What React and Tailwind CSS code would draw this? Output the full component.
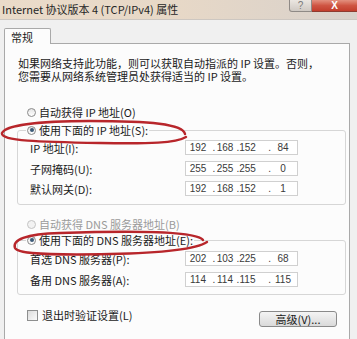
import React from "react";

function Radio({ checked, disabled, label, className = "" }) {
  return (
    <div className={"flex items-center h-[14px] gap-[3px] " + className}>
      <span
        className={
          "w-[9px] h-[9px] rounded-full border flex items-center justify-center " +
          (disabled
            ? "border-[#c4c4c4] bg-[#f2f2f2]"
            : "border-[#8a8a8a] bg-gradient-to-b from-[#e4e4e4] to-[#ffffff]")
        }
      >
        {checked && <span className="w-[4px] h-[4px] rounded-full bg-[#3b5a78]" />}
      </span>
      <span className={disabled ? "text-[#9a9a9a]" : "text-[#1a1a1a]"}>{label}</span>
    </div>
  );
}

function IpField({ parts, className = "" }) {
  return (
    <div
      className={
        "w-[113px] h-[15px] border border-[#d0d0d0] bg-white flex items-center text-[10px] text-[#3a3a3a] [font-family:'Liberation_Sans',sans-serif] " +
        className
      }
    >
      <span className="w-[24px] flex justify-center">{parts[0]}</span>
      <span className="w-[8px] flex justify-center">.</span>
      <span className="w-[14px] flex justify-center">{parts[1]}</span>
      <span className="w-[12px] flex justify-center">.</span>
      <span className="w-[7px] flex justify-center">{parts[2]}</span>
      <span className="w-[21px] flex justify-end pr-[1px]">.</span>
      <span className="w-[22px] flex justify-center">{parts[3]}</span>
    </div>
  );
}

function Row({ label, parts, className = "" }) {
  return (
    <div className={"flex items-center h-[15px] " + className}>
      <span className="pl-[12px] text-[#1a1a1a]">{label}</span>
      <IpField parts={parts} className="ml-auto mr-[47px]" />
    </div>
  );
}

export default function App() {
  return (
    <div className="relative w-[357px] h-[339px] overflow-hidden bg-[#f0f0f0] text-[11px] leading-[14px] text-[#1a1a1a] [font-family:'Noto_Sans_CJK_SC','Noto_Sans',sans-serif]">
      {/* title bar */}
      <div className="h-[20px] flex bg-gradient-to-r from-[#eadbc9] via-[#e7d8c7] to-[#d8d1cb] border-b border-[#cdc7c1]">
        <div className="pl-[2px] pt-[2px] text-[11px] leading-[14px] text-[#262626]">
          Internet 协议版本 4 (TCP/IPv4) 属性
        </div>
        <div className="ml-auto flex h-[12px]">
          <div className="w-[23px] h-[12px] border border-t-0 border-[#8f8a86] rounded-bl-[3px] bg-gradient-to-b from-[#ebe6e1] to-[#cfc9c3] text-[#7a7a7a] flex items-center justify-center text-[10px] leading-[10px] [font-family:'Liberation_Sans',sans-serif]">
            ?
          </div>
          <div className="w-[45px] h-[12px] border-b border-[#8e3b30] bg-gradient-to-b from-[#e2907f] via-[#cf5543] to-[#c23d2c] text-white flex items-center justify-center text-[10px] leading-[10px] font-bold [font-family:'Liberation_Sans',sans-serif]">
            X
          </div>
        </div>
      </div>

      {/* tabs */}
      <div className="pl-[4px] pt-[8px]">
        <div className="relative z-10 -mb-px w-[47px] h-[16px] border border-b-0 border-[#a9a9a9] bg-[#fcfcfc] flex items-center pl-[6px] rounded-t-[2px]">
          常规
        </div>
        <div className="w-[346px] h-[320px] border border-[#a9a9a9] bg-[#fcfcfc]">
          <div className="pl-[13px] pt-[13px] leading-[13px]">
            <p>如果网络支持此功能，则可以获取自动指派的 IP 设置。否则，</p>
            <p>您需要从网络系统管理员处获得适当的 IP 设置。</p>
          </div>

          <Radio disabled={false} label="自动获得 IP 地址(O)" className="ml-[22px] mt-[22px]" />

          <fieldset className="ml-[12px] mt-[4px] w-[329px] border border-[#d6d6d6] rounded-[3px] pb-[8px]">
            <legend className="ml-[8px] px-[1px]">
              <Radio checked label="使用下面的 IP 地址(S):" />
            </legend>
            <Row label="IP 地址(I):" parts={["192", "168", "152", "84"]} className="mt-[3px]" />
            <Row label="子网掩码(U):" parts={["255", "255", "255", "0"]} className="mt-[6px]" />
            <Row label="默认网关(D):" parts={["192", "168", "152", "1"]} className="mt-[5px]" />
          </fieldset>

          <Radio disabled label="自动获得 DNS 服务器地址(B)" className="ml-[22px] mt-[12px]" />

          <fieldset className="ml-[12px] mt-[2px] w-[329px] border border-[#d6d6d6] rounded-[3px] pb-[7px]">
            <legend className="ml-[8px] px-[1px]">
              <Radio checked label="使用下面的 DNS 服务器地址(E):" />
            </legend>
            <Row label="首选 DNS 服务器(P):" parts={["202", "103", "225", "68"]} className="mt-[4px]" />
            <Row label="备用 DNS 服务器(A):" parts={["114", "114", "115", "115"]} className="mt-[6px]" />
          </fieldset>

          <div className="flex items-start mt-[14px]">
            <div className="ml-[22px] flex items-center h-[12px] gap-[4px]">
              <span className="w-[11px] h-[11px] border border-[#8e8f8f] bg-gradient-to-br from-[#dcdcdc] to-[#fafafa]" />
              <span>退出时验证设置(L)</span>
            </div>
            <button className="ml-auto mr-[12px] mt-[2px] w-[78px] h-[16px] border border-[#8a8a8a] rounded-[3px] bg-gradient-to-b from-[#f4f4f4] to-[#dadada] flex items-center justify-center text-[11px] leading-[14px] text-[#1a1a1a]">
              高级(V)...
            </button>
          </div>
        </div>
      </div>

      {/* hand-drawn red marks */}
      <svg className="absolute inset-0 pointer-events-none" width="357" height="339" viewBox="0 0 357 339">
        <path
          d="M185 134 C183 124, 150 121, 90 121 C40 121, 6 125, 2 133 C0 141, 40 142, 100 143 C150 144, 176 143, 186 137"
          fill="none"
          stroke="#b8262b"
          strokeWidth="2.4"
          strokeLinecap="round"
        />
        <path
          d="M203 240 C196 230, 120 231, 60 233 C25 234, 12 240, 15 248 C18 255, 60 255, 110 254 C160 253, 195 250, 207 242"
          fill="none"
          stroke="#b8262b"
          strokeWidth="2.4"
          strokeLinecap="round"
        />
      </svg>
    </div>
  );
}
